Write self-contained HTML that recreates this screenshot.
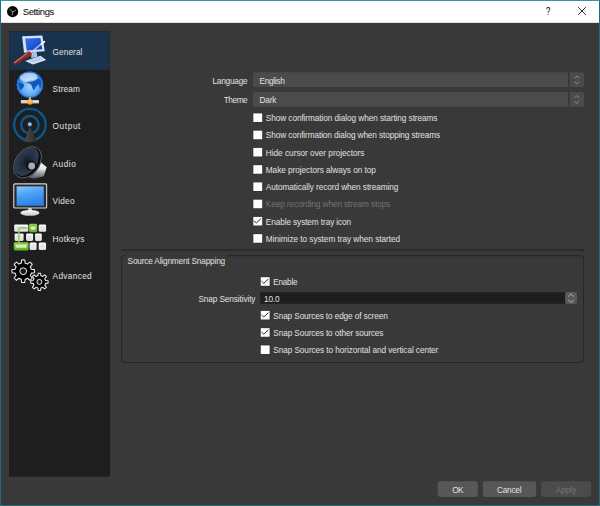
<!DOCTYPE html>
<html lang="en"><head><meta charset="utf-8"><title>Settings</title>
<style>
html,body{margin:0;padding:0;background:#3a393a;}
body{width:600px;height:506px;position:relative;overflow:hidden;font-family:"Liberation Sans",sans-serif;font-size:8.25px;color:#e1e0e1;}
#win{position:absolute;left:0;top:0;width:598px;height:504px;border:1px solid #1d707b;border-top-color:#3d929b;background:#3a393a;box-shadow:inset 0 0 0 1px #3d3635;}
.t{position:absolute;white-space:nowrap;line-height:12px;height:12px;}
.tt{color:#000;font-size:9.5px;}
.q{font-size:10.8px;transform:scaleX(0.72);transform-origin:0 0;}
.dis{color:#747374;}
svg{display:block;}
</style></head><body>
<div id="win"></div>
<svg style="position:absolute;left:0;top:0" width="600" height="506" viewBox="0 0 600 506"><rect x="1.00" y="1.00" width="598.00" height="21.85" fill="#ffffff"/><rect x="9.00" y="31.00" width="101.00" height="445.70" fill="#1f1e1f"/><rect x="9.80" y="31.80" width="99.40" height="37.65" fill="#19334c" stroke="#1b3954" stroke-width="0.5"/><rect x="253.00" y="72.35" width="331.10" height="14.75" rx="2.2" fill="#4c4b4c"/><rect x="568.10" y="72.35" width="1.70" height="14.75" fill="#3a393a"/><path d="M574.65 78.17 l2.25 -2.2 l2.25 2.2 M574.65 81.62 l2.25 2.2 l2.25 -2.2" fill="none" stroke="#9c9b9c" stroke-width="0.85"/><rect x="253.00" y="91.95" width="331.10" height="14.85" rx="2.2" fill="#4c4b4c"/><rect x="568.10" y="91.95" width="1.70" height="14.85" fill="#3a393a"/><path d="M574.65 97.83 l2.25 -2.2 l2.25 2.2 M574.65 101.28 l2.25 2.2 l2.25 -2.2" fill="none" stroke="#9c9b9c" stroke-width="0.85"/><rect x="252.50" y="112.60" width="10.50" height="10.20" rx="0.8" fill="#2c2b2c" opacity="0.55"/><rect x="253.30" y="113.40" width="8.90" height="8.60" fill="#fdfdfd"/><rect x="252.50" y="129.85" width="10.50" height="10.20" rx="0.8" fill="#2c2b2c" opacity="0.55"/><rect x="253.30" y="130.65" width="8.90" height="8.60" fill="#fdfdfd"/><rect x="252.50" y="147.10" width="10.50" height="10.20" rx="0.8" fill="#2c2b2c" opacity="0.55"/><rect x="253.30" y="147.90" width="8.90" height="8.60" fill="#fdfdfd"/><rect x="252.50" y="164.35" width="10.50" height="10.20" rx="0.8" fill="#2c2b2c" opacity="0.55"/><rect x="253.30" y="165.15" width="8.90" height="8.60" fill="#fdfdfd"/><rect x="252.50" y="181.60" width="10.50" height="10.20" rx="0.8" fill="#2c2b2c" opacity="0.55"/><rect x="253.30" y="182.40" width="8.90" height="8.60" fill="#fdfdfd"/><rect x="252.50" y="198.85" width="10.50" height="10.20" rx="0.8" fill="#2c2b2c" opacity="0.55"/><rect x="253.30" y="199.65" width="8.90" height="8.60" fill="#fdfdfd"/><rect x="252.50" y="216.10" width="10.50" height="10.20" rx="0.8" fill="#2c2b2c" opacity="0.55"/><rect x="253.30" y="216.90" width="8.90" height="8.60" fill="#fdfdfd"/><path d="M254.10 220.90 l2.2 2.1 l4.6 -4.3" fill="none" stroke="#2c2c2c" stroke-width="1.0"/><rect x="252.50" y="233.35" width="10.50" height="10.20" rx="0.8" fill="#2c2b2c" opacity="0.55"/><rect x="253.30" y="234.15" width="8.90" height="8.60" fill="#fdfdfd"/><rect x="121.00" y="249.10" width="463.30" height="2.00" fill="#2d2c2d"/><rect x="121.6" y="255.6" width="462.0" height="106.9" rx="3.5" fill="none" stroke="#282728" stroke-width="1.15"/><rect x="125.60" y="254.50" width="100.60" height="3.00" fill="#3a393a"/><rect x="259.95" y="276.40" width="10.50" height="10.20" rx="0.8" fill="#2c2b2c" opacity="0.55"/><rect x="260.75" y="277.20" width="8.90" height="8.60" fill="#fdfdfd"/><path d="M261.55 281.20 l2.2 2.1 l4.6 -4.3" fill="none" stroke="#2c2c2c" stroke-width="1.0"/><rect x="259.95" y="310.10" width="10.50" height="10.20" rx="0.8" fill="#2c2b2c" opacity="0.55"/><rect x="260.75" y="310.90" width="8.90" height="8.60" fill="#fdfdfd"/><path d="M261.55 314.90 l2.2 2.1 l4.6 -4.3" fill="none" stroke="#2c2c2c" stroke-width="1.0"/><rect x="259.95" y="327.35" width="10.50" height="10.20" rx="0.8" fill="#2c2b2c" opacity="0.55"/><rect x="260.75" y="328.15" width="8.90" height="8.60" fill="#fdfdfd"/><path d="M261.55 332.15 l2.2 2.1 l4.6 -4.3" fill="none" stroke="#2c2c2c" stroke-width="1.0"/><rect x="259.95" y="344.60" width="10.50" height="10.20" rx="0.8" fill="#2c2b2c" opacity="0.55"/><rect x="260.75" y="345.40" width="8.90" height="8.60" fill="#fdfdfd"/><rect x="260.30" y="292.20" width="305.70" height="11.60" fill="#1f1e1f"/><rect x="565.00" y="292.00" width="12.00" height="12.00" rx="2.2" fill="#5a595a"/><path d="M568.1 296.65 l2.9 -2.7 l2.9 2.7 M568.1 299.8 l2.9 2.7 l2.9 -2.7" fill="none" stroke="#b4b4b4" stroke-width="0.95"/><rect x="437.70" y="481.25" width="40.10" height="15.65" rx="2.4" fill="#585758"/><rect x="482.80" y="481.25" width="53.40" height="15.65" rx="2.4" fill="#585758"/><rect x="541.00" y="481.25" width="50.00" height="15.65" rx="2.4" fill="#4c4b4c"/></svg>
<svg style="position:absolute;left:576px;top:5px" width="12" height="12" viewBox="0 0 12 12"><path d="M2.1 2.1 L9.9 9.9 M9.9 2.1 L2.1 9.9" stroke="#111" stroke-width="0.85" fill="none"/></svg>
<svg style="position:absolute;left:6px;top:4.5px" width="14" height="14" viewBox="0 0 14 14"><circle cx="6.62" cy="6.65" r="5.60" fill="#050505"/><path d="M6.5 6.9 Q5.6 5.2 4.1 4.4 M6.5 6.9 Q8.3 6.6 9.8 5.2 M6.5 6.9 Q7.1 8.6 6.3 10.1" fill="none" stroke="#a4a4a4" stroke-width="0.85" stroke-linecap="round"/></svg>
<svg style="position:absolute;left:0;top:0" width="112" height="300" viewBox="0 0 112 300">
<defs>
<linearGradient id="scr" x1="0" y1="0" x2="1" y2="1"><stop offset="0" stop-color="#3a72ee"/><stop offset="1" stop-color="#0d3cc0"/></linearGradient>
<linearGradient id="hnd" x1="0" y1="0" x2="0" y2="1"><stop offset="0" stop-color="#e88a78"/><stop offset="0.5" stop-color="#b83a30"/><stop offset="1" stop-color="#7a1f1a"/></linearGradient>
<radialGradient id="glb" cx="0.5" cy="0.58" r="0.56"><stop offset="0" stop-color="#a4d2fa"/><stop offset="0.55" stop-color="#63acf4"/><stop offset="0.88" stop-color="#2179e6"/><stop offset="1" stop-color="#1664d6"/></radialGradient>
<radialGradient id="org" cx="0.5" cy="0.4" r="0.6"><stop offset="0" stop-color="#ffe060"/><stop offset="1" stop-color="#f08a10"/></radialGradient>
<linearGradient id="bar" x1="0" y1="0" x2="0" y2="1"><stop offset="0" stop-color="#ffffff"/><stop offset="1" stop-color="#b0b0b0"/></linearGradient>
<linearGradient id="cone" x1="0" y1="0" x2="1" y2="0"><stop offset="0" stop-color="#4a4a4a"/><stop offset="0.5" stop-color="#3c3c3c"/><stop offset="1" stop-color="#2c2c2c"/></linearGradient>
<radialGradient id="ball" cx="0.4" cy="0.35" r="0.7"><stop offset="0" stop-color="#b8e0ff"/><stop offset="1" stop-color="#2a8af0"/></radialGradient>
<radialGradient id="spk" cx="0.5" cy="0.5" r="0.5"><stop offset="0" stop-color="#141a22"/><stop offset="0.55" stop-color="#253042"/><stop offset="1" stop-color="#2f3e54"/></radialGradient>
<linearGradient id="mag" x1="0.6" y1="0" x2="0.5" y2="1"><stop offset="0" stop-color="#ffffff"/><stop offset="0.45" stop-color="#e4e8ec"/><stop offset="0.7" stop-color="#9a9ea4"/><stop offset="1" stop-color="#5a5e64"/></linearGradient>
<linearGradient id="vid" x1="0" y1="0" x2="0.3" y2="1"><stop offset="0" stop-color="#86c8fb"/><stop offset="0.5" stop-color="#4aa0f2"/><stop offset="1" stop-color="#2a84ea"/></linearGradient>
<linearGradient id="std" x1="0" y1="0" x2="0" y2="1"><stop offset="0" stop-color="#ffffff"/><stop offset="1" stop-color="#c4c4c4"/></linearGradient>
<linearGradient id="key" x1="0" y1="0" x2="0" y2="1"><stop offset="0" stop-color="#ffffff"/><stop offset="1" stop-color="#dcdcdc"/></linearGradient>
<linearGradient id="gkey" x1="0" y1="0" x2="0" y2="1"><stop offset="0" stop-color="#8ad048"/><stop offset="1" stop-color="#5cb028"/></linearGradient>
</defs>
<g>
<polygon points="22.1,36.3 42.4,35.5 44.7,51.3 24,52.8" fill="#cfe2f6"/>
<polygon points="25.2,38.6 40.4,38 42.3,49.3 26.7,50.6" fill="url(#scr)"/>
<polygon points="31.5,52.2 36.6,51.9 37.4,56.8 31.2,58" fill="#aac2e4"/>
<polygon points="25.1,61 40.5,55.8 46.2,59.9 33,64.6" fill="#d4e4f8"/>
<polygon points="28.5,60.6 40.2,56.8 43.6,59.2 32.6,62.8" fill="#b4cdf0"/>
<line x1="29.5" y1="53.6" x2="43.2" y2="42.6" stroke="#c4ccd8" stroke-width="1.3"/>
<line x1="41.3" y1="44.1" x2="44.2" y2="41.7" stroke="#f4f8ff" stroke-width="2" stroke-linecap="round"/>
<polygon points="15.15,64.24 14.05,62.56 26.25,53.58 28.19,52.06 29.74,52.00 31.06,54.00 30.39,55.40 28.23,56.58" fill="#93302a" stroke="#93302a" stroke-width="1.2" stroke-linejoin="round"/>
<line x1="14.48" y1="62.52" x2="27.15" y2="53.22" stroke="#cf8c82" stroke-width="1.0" stroke-linecap="round"/>
<line x1="15.52" y1="64.11" x2="29.13" y2="56.23" stroke="#7c1e18" stroke-width="0.9" stroke-linecap="round"/>
</g>
<g>
<circle cx="29.9" cy="84.6" r="13.2" fill="url(#glb)"/>
<path d="M27.3 81.2 C29.5 79.8 33 80.3 36 79 C38.5 78 41 79.5 41.3 82 C41.5 84.5 41 87 40 88.5 C39.3 87 39.3 85.5 38.5 84 C37 85.5 35.5 87 34.6 89.5 C33.8 90.5 32.8 89.5 32.4 87.8 C32 85.2 30.5 83.6 28.8 83.2 C27.2 82.8 26.4 82 27.3 81.2Z" fill="#1158b8"/>
<path d="M18.6 82.6 C20.6 82 23.6 83.4 24.2 85.2 C23.7 87.2 22.3 88.8 20.4 90.2 C19 88.6 18.1 85.5 18.6 82.6Z" fill="#1158b8"/>
<ellipse cx="28.6" cy="77.2" rx="9.2" ry="4.8" fill="#ffffff" opacity="0.6"/>
<circle cx="29.9" cy="84.6" r="12.8" fill="none" stroke="#1c6ede" stroke-width="0.9"/>
<rect x="29.1" y="97.3" width="1.6" height="2.4" fill="#d8d8d8"/>
<rect x="20.8" y="100.3" width="18.2" height="3.2" rx="0.6" fill="url(#bar)"/>
<circle cx="29.9" cy="101.8" r="2.9" fill="url(#org)"/>
</g>
<g>
<circle cx="29.9" cy="124.7" r="15.8" fill="none" stroke="#0a568f" stroke-width="2.4"/>
<circle cx="29.9" cy="124.7" r="8.7" fill="none" stroke="#0a568f" stroke-width="2.4"/>
<path d="M29.9 126 L24.2 141.3 Q29.9 143.4 36.4 141.3 Z" fill="url(#cone)"/>
<circle cx="29.9" cy="124.4" r="2.1" fill="url(#ball)"/>
</g>
<g>
<g transform="translate(33.5,168.8) rotate(-55)"><ellipse cx="0" cy="0" rx="9.5" ry="8.6" fill="url(#mag)"/></g>
<polygon points="38,160.5 46.3,167.2 43.4,176 33.5,178.3 28,176" fill="url(#mag)" stroke="url(#mag)" stroke-width="0.8" stroke-linejoin="round"/>
<g transform="translate(27.5,162.3) rotate(-55)">
<ellipse cx="0" cy="0" rx="17.6" ry="12.4" fill="#0c0c0e"/>
<ellipse cx="0" cy="0" rx="17.2" ry="12" fill="none" stroke="#8a8e94" stroke-width="0.6"/>
<ellipse cx="0" cy="-1.2" rx="15.8" ry="10.2" fill="url(#spk)"/>
</g>
<ellipse cx="31" cy="165.6" rx="5.4" ry="5" fill="#10141a"/>
<circle cx="31.7" cy="166" r="3.4" fill="#a8aaac"/>
</g>
<g>
<rect x="28.2" y="208" width="3.6" height="3.4" fill="#d0d0d0"/>
<ellipse cx="29.9" cy="212.9" rx="9.6" ry="2.9" fill="url(#std)"/>
<rect x="13.2" y="183.3" width="34" height="25.2" rx="1.6" fill="#d4d4d4"/>
<rect x="14.3" y="184.4" width="31.8" height="23" rx="1" fill="#2c2c2c"/>
<rect x="16.6" y="186.4" width="27.2" height="19.3" fill="url(#vid)"/>
<polygon points="43.8,186.4 43.8,196 30,205.7 16.6,205.7 16.6,200" fill="#ffffff" opacity="0.0"/>
</g>
<g>
<rect x="14.20" y="224.40" width="14.10" height="7.40" rx="1.3" fill="url(#key)"/>
<rect x="38.70" y="224.40" width="7.40" height="7.40" rx="1.3" fill="url(#key)"/>
<rect x="14.60" y="233.50" width="9.00" height="7.40" rx="1.3" fill="url(#key)"/>
<rect x="26.10" y="233.50" width="7.00" height="7.40" rx="1.3" fill="url(#key)"/>
<rect x="35.10" y="233.50" width="6.70" height="7.40" rx="1.3" fill="url(#key)"/>
<rect x="29.60" y="242.60" width="7.00" height="7.40" rx="1.3" fill="url(#key)"/>
<rect x="38.70" y="242.60" width="7.40" height="7.40" rx="1.3" fill="url(#key)"/>
<rect x="15.90" y="226.00" width="10.70" height="3.80" rx="0.8" fill="#e4e4e4"/>
<rect x="40.40" y="226.00" width="4.00" height="3.80" rx="0.8" fill="#e4e4e4"/>
<rect x="16.30" y="235.10" width="5.60" height="3.80" rx="0.8" fill="#e4e4e4"/>
<rect x="27.80" y="235.10" width="3.60" height="3.80" rx="0.8" fill="#e4e4e4"/>
<rect x="36.80" y="235.10" width="3.30" height="3.80" rx="0.8" fill="#e4e4e4"/>
<rect x="31.30" y="244.20" width="3.60" height="3.80" rx="0.8" fill="#e4e4e4"/>
<rect x="40.40" y="244.20" width="4.00" height="3.80" rx="0.8" fill="#e4e4e4"/>
<path d="M27.5 228 L20.6 228 Q18.9 228 18.9 229.8 L18.9 243" fill="none" stroke="#8ccc58" stroke-width="2" opacity="0.75"/>
<rect x="29.00" y="223.80" width="8.20" height="8.40" rx="1.3" fill="url(#gkey)"/>
<rect x="13.80" y="242.20" width="14.80" height="8.20" rx="1.3" fill="url(#gkey)"/>
<path d="M30.9 226.4 L31.2 229.4 L35 229.4 L35.3 226.4" fill="#d4f2b4" stroke="#d4f2b4" stroke-width="0.5"/>
<path d="M15.7 244.4 L16.2 247.6 L26.2 247.6 L26.7 244.4" fill="#d4f2b4" stroke="#d4f2b4" stroke-width="0.5"/>
</g>
<g fill="#000" stroke="#efefef" stroke-width="1.05" stroke-linejoin="round">
<path d="M25.14 279.27 L24.79 282.39 A11.30 11.30 0 0 1 21.61 282.39 L21.26 279.27 A8.30 8.30 0 0 1 18.86 278.28 L16.42 280.24 A11.30 11.30 0 0 1 14.16 277.98 L16.12 275.54 A8.30 8.30 0 0 1 15.13 273.14 L12.01 272.79 A11.30 11.30 0 0 1 12.01 269.61 L15.13 269.26 A8.30 8.30 0 0 1 16.12 266.86 L14.16 264.42 A11.30 11.30 0 0 1 16.42 262.16 L18.86 264.12 A8.30 8.30 0 0 1 21.26 263.13 L21.61 260.01 A11.30 11.30 0 0 1 24.79 260.01 L25.14 263.13 A8.30 8.30 0 0 1 27.54 264.12 L29.98 262.16 A11.30 11.30 0 0 1 32.24 264.42 L30.28 266.86 A8.30 8.30 0 0 1 31.27 269.26 L34.39 269.61 A11.30 11.30 0 0 1 34.39 272.79 L31.27 273.14 A8.30 8.30 0 0 1 30.28 275.54 L32.24 277.98 A11.30 11.30 0 0 1 29.98 280.24 L27.54 278.28 A8.30 8.30 0 0 1 25.14 279.27 Z"/>
<path d="M40.87 288.03 L40.63 290.51 A8.70 8.70 0 0 1 38.17 290.51 L37.93 288.03 A6.30 6.30 0 0 1 36.11 287.27 L34.18 288.86 A8.70 8.70 0 0 1 32.44 287.12 L34.03 285.19 A6.30 6.30 0 0 1 33.27 283.37 L30.79 283.13 A8.70 8.70 0 0 1 30.79 280.67 L33.27 280.43 A6.30 6.30 0 0 1 34.03 278.61 L32.44 276.68 A8.70 8.70 0 0 1 34.18 274.94 L36.11 276.53 A6.30 6.30 0 0 1 37.93 275.77 L38.17 273.29 A8.70 8.70 0 0 1 40.63 273.29 L40.87 275.77 A6.30 6.30 0 0 1 42.69 276.53 L44.62 274.94 A8.70 8.70 0 0 1 46.36 276.68 L44.77 278.61 A6.30 6.30 0 0 1 45.53 280.43 L48.01 280.67 A8.70 8.70 0 0 1 48.01 283.13 L45.53 283.37 A6.30 6.30 0 0 1 44.77 285.19 L46.36 287.12 A8.70 8.70 0 0 1 44.62 288.86 L42.69 287.27 A6.30 6.30 0 0 1 40.87 288.03 Z"/>
<circle cx="23.2" cy="271.2" r="3.4" fill="#1a1a1a" stroke-width="1"/>
<circle cx="39.4" cy="281.9" r="2.5" fill="#1a1a1a" stroke-width="0.95"/>
</g>
</svg>
<div class="t" id="s0" style="top:47px;left:52.60px;letter-spacing:0.077px;">General</div>
<div class="t" id="s1" style="top:84px;left:52.60px;letter-spacing:0.151px;">Stream</div>
<div class="t" id="s2" style="top:121px;left:52.60px;letter-spacing:0.603px;">Output</div>
<div class="t" id="s3" style="top:159px;left:52.60px;letter-spacing:0.518px;">Audio</div>
<div class="t" id="s4" style="top:196px;left:52.60px;letter-spacing:0.249px;">Video</div>
<div class="t" id="s5" style="top:234px;left:52.60px;letter-spacing:0.312px;">Hotkeys</div>
<div class="t" id="s6" style="top:271px;left:52.60px;letter-spacing:0.337px;">Advanced</div>
<div class="t tt" id="title" style="top:6px;left:22.75px;letter-spacing:-0.391px;">Settings</div>
<div class="t tt q" id="help" style="top:5px;left:545.90px;letter-spacing:1.669px;">?</div>
<div class="t" id="l1" style="top:76px;right:352.51px;letter-spacing:-0.215px;">Language</div>
<div class="t" id="l2" style="top:95px;right:352.74px;letter-spacing:-0.438px;">Theme</div>
<div class="t" id="c1" style="top:76px;left:259.60px;letter-spacing:-0.323px;">English</div>
<div class="t" id="c2" style="top:95px;left:259.60px;letter-spacing:-0.230px;">Dark</div>
<div class="t" id="k0" style="top:113px;left:265.80px;letter-spacing:-0.078px;">Show confirmation dialog when starting streams</div>
<div class="t" id="k1" style="top:130px;left:265.80px;letter-spacing:-0.109px;">Show confirmation dialog when stopping streams</div>
<div class="t" id="k2" style="top:148px;left:265.80px;letter-spacing:-0.017px;">Hide cursor over projectors</div>
<div class="t" id="k3" style="top:165px;left:265.80px;letter-spacing:-0.050px;">Make projectors always on top</div>
<div class="t" id="k4" style="top:182px;left:265.80px;letter-spacing:-0.077px;">Automatically record when streaming</div>
<div class="t dis" id="k5" style="top:199px;left:265.80px;letter-spacing:-0.100px;">Keep recording when stream stops</div>
<div class="t" id="k6" style="top:217px;left:265.80px;letter-spacing:-0.100px;">Enable system tray icon</div>
<div class="t" id="k7" style="top:234px;left:265.80px;letter-spacing:-0.039px;">Minimize to system tray when started</div>
<div class="t" id="gt" style="top:256px;left:127.60px;letter-spacing:-0.177px;">Source Alignment Snapping</div>
<div class="t" id="g0" style="top:277px;left:273.30px;letter-spacing:-0.284px;">Enable</div>
<div class="t" id="gl" style="top:294px;right:344.61px;letter-spacing:-0.106px;">Snap Sensitivity</div>
<div class="t" id="gv" style="top:294px;left:264.00px;letter-spacing:-0.191px;">10.0</div>
<div class="t" id="g1" style="top:311px;left:273.30px;letter-spacing:-0.119px;">Snap Sources to edge of screen</div>
<div class="t" id="g2" style="top:328px;left:273.30px;letter-spacing:-0.113px;">Snap Sources to other sources</div>
<div class="t" id="g3" style="top:345px;left:273.30px;letter-spacing:-0.082px;">Snap Sources to horizontal and vertical center</div>
<div class="t" id="b1" style="top:485px;left:457.44px;width:0;display:flex;justify-content:center;letter-spacing:-0.711px;"><span>OK</span></div>
<div class="t" id="b2" style="top:485px;left:509.08px;width:0;display:flex;justify-content:center;letter-spacing:-0.231px;"><span>Cancel</span></div>
<div class="t dis" id="b3" style="top:485px;left:565.99px;width:0;display:flex;justify-content:center;letter-spacing:-0.028px;"><span>Apply</span></div>
</body></html>
